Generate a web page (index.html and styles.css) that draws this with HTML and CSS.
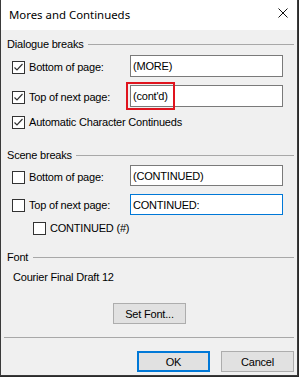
FILE: index.html
```html
<!doctype html>
<html>
<head>
  <meta charset="utf-8" />
  <title>Mores and Continueds</title>
  <link rel="stylesheet" href="styles.css">
</head>
<body>
  <div class="window">
    <div class="titlebar">
      <span class="title">Mores and Continueds</span>
      <svg class="close" width="10" height="10" viewBox="0 0 10 10">
        <path d="M0.5 0.5 L9.5 9.5 M9.5 0.5 L0.5 9.5" stroke="#111" stroke-width="1" fill="none" />
      </svg>
    </div>
    <div class="content">
      <div class="group-head dlg-head"><span>Dialogue breaks</span><span class="rule"></span></div>

      <div class="row r1">
        <div class="check"><span class="box"><svg width="11" height="11" viewBox="0 0 11 11"><path d="M1.5 5.5 L4 8 L9.5 2" stroke="#333" stroke-width="1.2" fill="none" /></svg></span>Bottom of page:</div>
        <div class="field">(MORE)</div>
      </div>

      <div class="row r2">
        <div class="check"><span class="box"><svg width="11" height="11" viewBox="0 0 11 11"><path d="M1.5 5.5 L4 8 L9.5 2" stroke="#333" stroke-width="1.2" fill="none" /></svg></span>Top of next page:</div>
        <div class="field">(cont'd)<span class="mark"></span></div>
      </div>

      <div class="row r3">
        <div class="check wide"><span class="box"><svg width="11" height="11" viewBox="0 0 11 11"><path d="M1.5 5.5 L4 8 L9.5 2" stroke="#333" stroke-width="1.2" fill="none" /></svg></span>Automatic Character Continueds</div>
      </div>

      <div class="group-head scene-head"><span>Scene breaks</span><span class="rule"></span></div>

      <div class="row s1">
        <div class="check"><span class="box"></span>Bottom of page:</div>
        <div class="field">(CONTINUED)</div>
      </div>

      <div class="row s2">
        <div class="check"><span class="box"></span>Top of next page:</div>
        <div class="field focus">CONTINUED:</div>
      </div>

      <div class="row s3">
        <div class="check wide"><span class="box"></span>CONTINUED (#)</div>
      </div>

      <div class="group-head font-head"><span>Font</span><span class="rule"></span></div>
      <div class="font-name">Courier Final Draft 12</div>

      <div class="setfont-row"><button class="btn setfont">Set Font...</button></div>

      <div class="separator"></div>

      <div class="actions">
        <button class="btn default">OK</button>
        <button class="btn">Cancel</button>
      </div>
    </div>
  </div>
</body>
</html>
```

FILE: styles.css
```css
body {
  margin: 0;
  background: #2a2a2a;
  font-family: 'Liberation Sans', Arial, sans-serif;
  font-size: 11px;
  letter-spacing: -0.2px;
  color: #000;
}
.window {
  width: 296px;
  border-left: 1px solid #3a3a3a;
  border-right: 1px solid #3a3a3a;
  border-bottom: 1px solid #3a3a3a;
  background: #f0f0f0;
}
.titlebar {
  height: 30px;
  background: #fff;
  display: flex;
  align-items: center;
  padding-left: 8px;
}
.title {
  font-family: 'Noto Sans', 'Open Sans', sans-serif;
  font-size: 11.4px;
  letter-spacing: 0;
  flex: 1;
  margin-top: -1px;
}
.close {
  margin-right: 9px;
  margin-top: -4px;
}
.content {
  padding: 0 3px 3px 0;
}
.group-head {
  height: 14px;
  display: flex;
  align-items: center;
  padding-left: 6px;
  line-height: 14px;
}
.group-head .rule {
  flex: 1;
  height: 1px;
  background: #a8a8a8;
  margin-left: 4px;
}
.dlg-head { margin-top: 7px; }
.scene-head { margin-top: 19px; }
.font-head { margin-top: 15px; }
.font-head .rule { margin-left: 5px; }

.row {
  display: flex;
  align-items: center;
  padding-left: 11px;
}
.check {
  width: 118px;
  display: flex;
  align-items: center;
  line-height: 13px;
}
.check.wide { width: auto; }
.box {
  width: 13px;
  height: 13px;
  box-sizing: border-box;
  border: 1px solid #333;
  background: #fff;
  margin-right: 4px;
  display: flex;
  align-items: center;
  justify-content: center;
}
.field {
  position: relative;
  width: 153px;
  box-sizing: border-box;
  border: 1px solid #7a7a7a;
  background: #fff;
  padding-left: 2px;
  display: flex;
  align-items: center;
}
.field.focus { border-color: #0078d7; }

.r1 { margin-top: 4px; height: 22px; }
.r1 .field { height: 22px; }
.r1 .check { margin-top: 3px; }
.r2 { margin-top: 8px; height: 22px; }
.r2 .field { height: 22px; }
.r2 .check { margin-top: 3px; }
.r3 { margin-top: 9px; height: 13px; }

.s1 { margin-top: 3px; height: 21px; }
.s1 .field { height: 21px; }
.s1 .check { margin-top: 4px; }
.s2 { margin-top: 8px; height: 21px; }
.s2 .field { height: 21px; }
.s2 .check { margin-top: 2px; }
.s3 { margin-top: 7px; height: 13px; padding-left: 32px; }

/* red highlight drawn over the field */
.mark {
  position: absolute;
  left: -5px;
  top: -4px;
  width: 49px;
  height: 28px;
  box-sizing: border-box;
  border: 2px solid #e0141e;
}

.font-name {
  margin-top: 6px;
  height: 14px;
  line-height: 14px;
  padding-left: 12px;
}
.setfont-row {
  margin-top: 19px;
  padding-left: 112px;
  height: 21px;
}
.btn {
  font-family: 'Liberation Sans', Arial, sans-serif;
  font-size: 11px;
  letter-spacing: -0.2px;
  color: #000;
  width: 73px;
  height: 21px;
  box-sizing: border-box;
  border: 1px solid #adadad;
  background: #e1e1e1;
  padding: 0;
  margin: 0;
  display: block;
}
.btn.default { border: 2px solid #0078d7; }
.separator {
  margin: 13px 0 0 3px;
  height: 1px;
  background: #a8a8a8;
}
.actions {
  margin-top: 13px;
  display: flex;
  justify-content: flex-end;
  gap: 11px;
}
```
